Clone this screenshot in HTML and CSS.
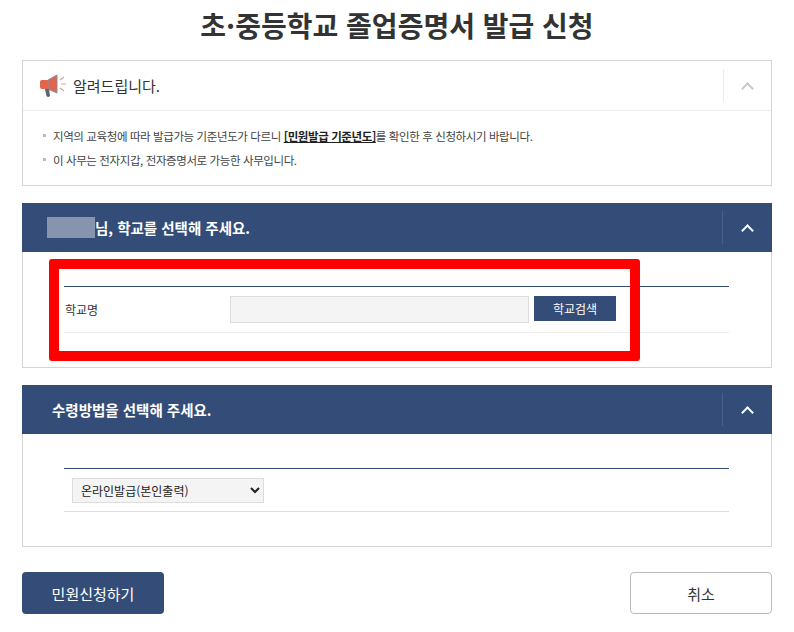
FILE: index.html
```html
<!DOCTYPE html>
<html lang="ko">
<head>
    <meta charset="UTF-8">
    <title>초·중등학교 졸업증명서 발급 신청</title>
    <link rel="stylesheet" href="styles.css">
</head>
<body>
    <h1 class="page-title">초·중등학교 졸업증명서 발급 신청</h1>

    <div class="notice">
        <div class="notice-head">
            <svg class="notice-icon" width="28" height="24" viewBox="0 0 28 24">
                <path d="M1 8 Q1 6 3 6 L9 6 L9 15 L3 15 Q1 15 1 13 Z" fill="#e0654a"/>
                <path d="M9 6 L18 1 L18 19 L9 15 Z" fill="#e0654a" stroke="#8a8f9c" stroke-width="1"/>
                <path d="M6 15 L10 15 L11 22 Q9 24 7.500 22 Z" fill="#5d6470"/>
                <path d="M21 6 L25 3 M22 10 L27 10 M21 14 L25 17" stroke="#c9a9a4" stroke-width="1.200"/>
            </svg>
            <span class="notice-title">알려드립니다.</span>
            <button class="toggle toggle-light"><span class="chevron"></span></button>
        </div>
        <ul class="notice-list">
            <li>지역의 교육청에 따라 발급가능 기준년도가 다르니 <a href="#">[민원발급 기준년도]</a>를 확인한 후 신청하시기 바랍니다.</li>
            <li>이 사무는 전자지갑, 전자증명서로 가능한 사무입니다.</li>
        </ul>
    </div>

    <section class="panel panel-school">
        <div class="panel-head">
            <h2><span class="masked"></span>님, 학교를 선택해 주세요.</h2>
            <button class="toggle"><span class="chevron"></span></button>
        </div>
        <div class="panel-body">
            <div class="form-row">
                <label class="row-label" for="school">학교명</label>
                <input type="text" id="school" class="school-input">
                <button class="search-btn">학교검색</button>
            </div>
        </div>
        <div class="highlight"></div>
    </section>

    <section class="panel panel-receive">
        <div class="panel-head">
            <h2>수령방법을 선택해 주세요.</h2>
            <button class="toggle"><span class="chevron"></span></button>
        </div>
        <div class="panel-body">
            <div class="form-row form-row-select">
                <select class="receive-select">
                    <option>온라인발급(본인출력)</option>
                </select>
            </div>
        </div>
    </section>

    <div class="actions">
        <button class="btn btn-submit">민원신청하기</button>
        <button class="btn btn-cancel">취소</button>
    </div>
</body>
</html>
```

FILE: styles.css
```css
* {
    box-sizing: border-box;
}
body {
    font-family: "Noto Sans CJK KR", "Noto Sans", sans-serif;
    margin: 0;
    padding: 0 22px;
    background: white;
    color: #333;
}
.page-title {
    margin: 0;
    height: 60px;
    padding-top: 4px;
    font-size: 28px;
    line-height: 42px;
    font-weight: 700;
    text-align: center;
    color: #333;
}
.notice {
    height: 126px;
    border: 1px solid #d5d5d5;
}
.notice-head {
    display: flex;
    align-items: center;
    height: 50px;
    padding-left: 16px;
    border-bottom: 1px solid #ececec;
    position: relative;
}
.notice-title {
    margin-left: 6px;
    font-size: 15px;
    color: #333;
}
.notice-list {
    list-style: none;
    margin: 0;
    padding: 13px 0 0 20px;
    font-size: 11.500px;
    line-height: 24px;
    letter-spacing: -0.400px;
    color: #444;
}
.notice-list li {
    position: relative;
    padding-left: 10px;
}
.notice-list li::before {
    content: "";
    position: absolute;
    left: 0;
    top: 10px;
    width: 3px;
    height: 3px;
    background: #bbb;
}
.notice-list a {
    font-weight: 700;
    color: #222;
}
.toggle {
    position: absolute;
    right: 0;
    top: 0;
    width: 50px;
    height: 100%;
    border: none;
    background: none;
    padding: 0;
    display: flex;
    align-items: center;
    justify-content: center;
}
.toggle::before {
    content: "";
    position: absolute;
    left: 0;
    top: 8px;
    bottom: 8px;
    width: 1px;
    background: #46608c;
}
.toggle-light {
    width: 48px;
}
.toggle-light::before {
    background: #ececec;
}
.chevron {
    width: 9px;
    height: 9px;
    margin-top: 5px;
    border-left: 2px solid white;
    border-top: 2px solid white;
    transform: rotate(45deg);
}
.toggle-light .chevron {
    border-color: #c8c8c8;
}
.panel {
    position: relative;
    margin-top: 17px;
    border: 1px solid #d5d5d5;
    border-top: none;
}
.panel-head {
    position: relative;
    height: 49px;
    margin: 0 -1px;
    background: #344d78;
    display: flex;
    align-items: center;
}
.panel-head h2 {
    margin: 0;
    padding-left: 30px;
    font-size: 14.500px;
    font-weight: 700;
    color: white;
    display: flex;
    align-items: center;
}
.masked {
    width: 48px;
    height: 21px;
    margin-left: -5px;
    background: #8794ae;
}
.panel-school .panel-body {
    height: 115px;
    padding: 34px 42px 0 41px;
}
.panel-receive h2 {
    padding-left: 30px;
}
.panel-receive .panel-body {
    height: 112px;
    padding: 34px 42px 0 41px;
}
.form-row {
    display: flex;
    align-items: center;
    height: 47px;
    border-top: 1px solid #344d78;
    border-bottom: 1px solid #ececec;
}
.row-label {
    width: 166px;
    padding-left: 1px;
    font-size: 12px;
    color: #333;
}
.school-input {
    width: 299px;
    height: 27px;
    background: #f4f4f4;
    border: 1px solid #ddd;
    padding: 0 8px;
}
.search-btn {
    width: 82px;
    height: 25px;
    margin-left: 5px;
    margin-top: -2px;
    border: none;
    background: #344d78;
    color: white;
    font-family: inherit;
    font-size: 12px;
    padding: 0;
}
.form-row-select {
    height: 44px;
    padding-left: 8px;
    border-bottom-color: #ddd;
}
.receive-select {
    width: 192px;
    height: 25px;
    background: #f4f4f4;
    border: 1px solid #ddd;
    border-radius: 0;
    padding-left: 4px;
    font-family: inherit;
    font-size: 12px;
    color: #222;
}
.highlight {
    position: absolute;
    left: 26px;
    top: 56px;
    width: 591px;
    height: 102px;
    border: 10px solid #ff0000;
    border-radius: 3px;
    pointer-events: none;
}
.actions {
    display: flex;
    justify-content: space-between;
    margin-top: 25px;
}
.btn {
    width: 142px;
    height: 42px;
    border-radius: 4px;
    font-family: inherit;
    font-size: 15px;
    padding: 0;
}
.btn-submit {
    background: #344d78;
    border: none;
    color: white;
}
.btn-cancel {
    background: white;
    border: 1px solid #bbb;
    color: #333;
}
```
